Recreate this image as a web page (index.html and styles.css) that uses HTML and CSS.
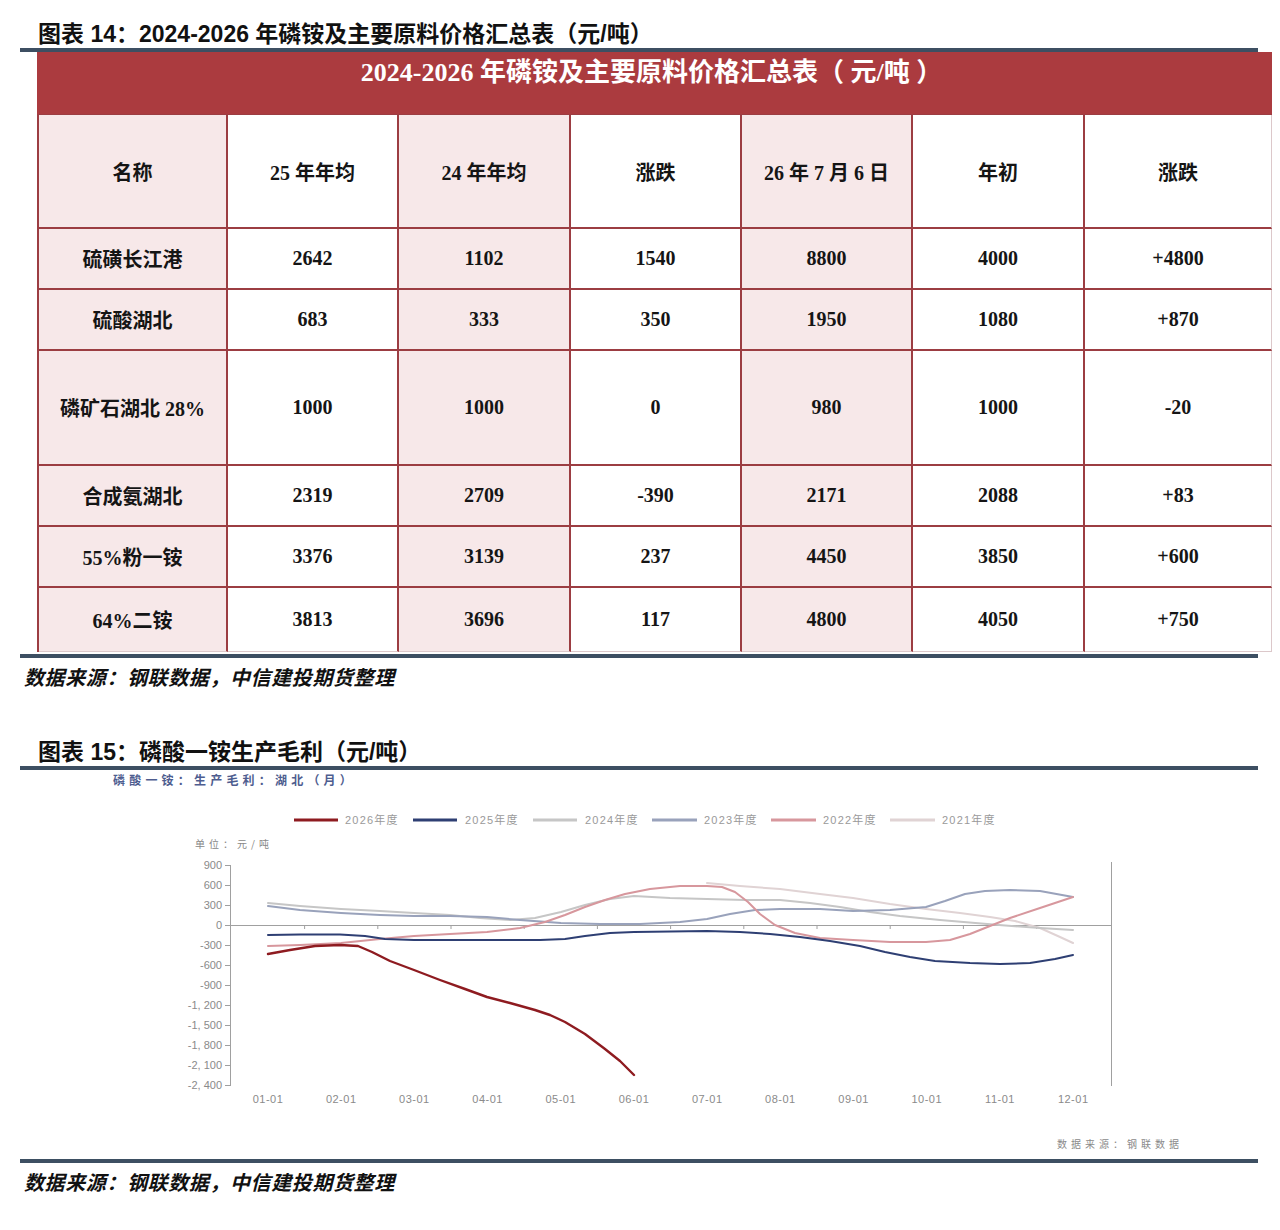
FILE: index.html
```html
<!DOCTYPE html>
<html lang="zh-CN">
<head>
<meta charset="utf-8">
<title>磷铵价格汇总</title>
<link rel="stylesheet" href="styles.css">
</head>
<body>
<div class="page">
  <h2 class="fig-title">图表 14：2024-2026 年磷铵及主要原料价格汇总表（元/吨）</h2>
  <div class="rule"></div>
  <div class="price-table">
    <div class="band">2024-2026 年磷铵及主要原料价格汇总表（ 元/吨 ）</div>
    <div class="grid">
      <div class="c s">名称</div><div class="c">25 年年均</div><div class="c s">24 年年均</div><div class="c">涨跌</div><div class="c s">26 年 7 月 6 日</div><div class="c">年初</div><div class="c e">涨跌</div>
      <div class="c s">硫磺长江港</div><div class="c">2642</div><div class="c s">1102</div><div class="c">1540</div><div class="c s">8800</div><div class="c">4000</div><div class="c e">+4800</div>
      <div class="c s">硫酸湖北</div><div class="c">683</div><div class="c s">333</div><div class="c">350</div><div class="c s">1950</div><div class="c">1080</div><div class="c e">+870</div>
      <div class="c s">磷矿石湖北 28%</div><div class="c">1000</div><div class="c s">1000</div><div class="c">0</div><div class="c s">980</div><div class="c">1000</div><div class="c e">-20</div>
      <div class="c s">合成氨湖北</div><div class="c">2319</div><div class="c s">2709</div><div class="c">-390</div><div class="c s">2171</div><div class="c">2088</div><div class="c e">+83</div>
      <div class="c s">55%粉一铵</div><div class="c">3376</div><div class="c s">3139</div><div class="c">237</div><div class="c s">4450</div><div class="c">3850</div><div class="c e">+600</div>
      <div class="c s l">64%二铵</div><div class="c l">3813</div><div class="c s l">3696</div><div class="c l">117</div><div class="c s l">4800</div><div class="c l">4050</div><div class="c e l">+750</div>
    </div>
  </div>
  <div class="rule rule-gap"></div>
  <p class="source">数据来源：钢联数据，中信建投期货整理</p>

  <h2 class="fig-title fig-title-2">图表 15：磷酸一铵生产毛利（元/吨）</h2>
  <div class="rule rule-gap"></div>
  <svg class="chart" width="1238" height="389" viewBox="20 770 1238 389" xmlns="http://www.w3.org/2000/svg">
    <text class="ctitle" x="113" y="785">磷酸一铵：生产毛利：湖北（月）</text>

    <g class="legend">
      <line x1="294" y1="820" x2="338" y2="820" stroke="#8e1b20"/>
      <text x="345" y="824">2026年度</text>
      <line x1="413" y1="820" x2="457" y2="820" stroke="#2e3f73"/>
      <text x="465" y="824">2025年度</text>
      <line x1="533" y1="820" x2="577" y2="820" stroke="#c6c6c6"/>
      <text x="585" y="824">2024年度</text>
      <line x1="652" y1="820" x2="697" y2="820" stroke="#99a2bb"/>
      <text x="704" y="824">2023年度</text>
      <line x1="771" y1="820" x2="816" y2="820" stroke="#d7979d"/>
      <text x="823" y="824">2022年度</text>
      <line x1="890" y1="820" x2="935" y2="820" stroke="#e0d3d4"/>
      <text x="942" y="824">2021年度</text>
    </g>

    <text class="unit" x="195" y="848">单位：元/吨</text>

    <g class="axis">
      <line x1="230.5" y1="865" x2="230.5" y2="1086"/>
      <line x1="1111.5" y1="862" x2="1111.5" y2="1086"/>
      <line x1="230" y1="925.5" x2="1112" y2="925.5"/>
      <line x1="225" y1="865.5" x2="230" y2="865.5"/>
      <line x1="225" y1="885.5" x2="230" y2="885.5"/>
      <line x1="225" y1="905.5" x2="230" y2="905.5"/>
      <line x1="225" y1="925.5" x2="230" y2="925.5"/>
      <line x1="225" y1="945.5" x2="230" y2="945.5"/>
      <line x1="225" y1="965.5" x2="230" y2="965.5"/>
      <line x1="225" y1="985.5" x2="230" y2="985.5"/>
      <line x1="225" y1="1005.5" x2="230" y2="1005.5"/>
      <line x1="225" y1="1025.5" x2="230" y2="1025.5"/>
      <line x1="225" y1="1045.5" x2="230" y2="1045.5"/>
      <line x1="225" y1="1065.5" x2="230" y2="1065.5"/>
      <line x1="225" y1="1085.5" x2="230" y2="1085.5"/>
      <line x1="304.6" y1="925" x2="304.6" y2="929"/>
      <line x1="377.8" y1="925" x2="377.8" y2="929"/>
      <line x1="451" y1="925" x2="451" y2="929"/>
      <line x1="524.2" y1="925" x2="524.2" y2="929"/>
      <line x1="597.4" y1="925" x2="597.4" y2="929"/>
      <line x1="670.6" y1="925" x2="670.6" y2="929"/>
      <line x1="743.8" y1="925" x2="743.8" y2="929"/>
      <line x1="817" y1="925" x2="817" y2="929"/>
      <line x1="890.2" y1="925" x2="890.2" y2="929"/>
      <line x1="963.4" y1="925" x2="963.4" y2="929"/>
      <line x1="1036.6" y1="925" x2="1036.6" y2="929"/>
    </g>

    <g class="ylab">
      <text x="222" y="869">900</text>
      <text x="222" y="889">600</text>
      <text x="222" y="909">300</text>
      <text x="222" y="929">0</text>
      <text x="222" y="949">-300</text>
      <text x="222" y="969">-600</text>
      <text x="222" y="989">-900</text>
      <text x="222" y="1009">-1, 200</text>
      <text x="222" y="1029">-1, 500</text>
      <text x="222" y="1049">-1, 800</text>
      <text x="222" y="1069">-2, 100</text>
      <text x="222" y="1089">-2, 400</text>
    </g>

    <g class="xlab">
      <text x="268" y="1103">01-01</text>
      <text x="341.2" y="1103">02-01</text>
      <text x="414.4" y="1103">03-01</text>
      <text x="487.6" y="1103">04-01</text>
      <text x="560.8" y="1103">05-01</text>
      <text x="634" y="1103">06-01</text>
      <text x="707.2" y="1103">07-01</text>
      <text x="780.4" y="1103">08-01</text>
      <text x="853.6" y="1103">09-01</text>
      <text x="926.8" y="1103">10-01</text>
      <text x="1000" y="1103">11-01</text>
      <text x="1073.2" y="1103">12-01</text>
    </g>

    <g class="series">
      <polyline stroke="#e0d3d4" points="707,883 740,886 780,889 820,894 853,898 890,904 926,909 960,913 990,917 1015,921 1040,928 1060,937 1073,943"/>
      <polyline stroke="#c6c6c6" points="268,903 300,906 341,909 380,911 414,913 450,915 480,918 510,920 535,918 561,912 585,905 610,899 634,896 670,898 707,899 745,900 780,900 810,903 840,907 870,912 900,916 940,920 999,925 1040,928 1073,930"/>
      <polyline stroke="#99a2bb" points="268,906 300,910 341,913 380,915 414,916 450,916 487,917 520,920 561,923 600,924 640,924 680,922 707,919 730,914 755,910 780,909 820,909 853,911 890,910 926,907 945,901 965,894 985,891 1010,890 1040,891 1073,897"/>
      <polyline stroke="#d7979d" points="268,946 300,945 341,943 380,939 414,936 450,934 487,932 520,928 545,922 565,915 585,907 605,900 625,894 650,889 680,886 707,886 722,887 735,892 748,902 760,914 775,925 795,933 820,938 853,940 890,942 926,942 950,940 970,934 990,926 1010,918 1040,908 1073,897"/>
      <polyline stroke="#2e3f73" points="268,935 300,934.5 340,934.5 365,936 385,939 414,940 487,940 540,940 565,939 585,936 610,933 634,932 707,931 740,932 770,934 800,937 830,941 860,946 885,952 910,957 935,961 970,963 1000,964 1030,963 1055,959 1073,955"/>
      <polyline class="s26" stroke="#8e1b20" points="268,954 290,950 315,946 340,945 358,946 372,952 390,961 414,970 440,980 465,989 487,997 510,1003 535,1010 550,1015 565,1022 585,1034 605,1049 620,1061 634,1075"/>
    </g>

    <text class="csrc" x="1057" y="1148">数据来源：钢联数据</text>
  </svg>
  <div class="rule"></div>
  <p class="source">数据来源：钢联数据，中信建投期货整理</p>
</div>
</body>
</html>
```

FILE: styles.css
```css
html, body {
  margin: 0;
  padding: 0;
  background: #ffffff;
}

.page {
  width: 1280px;
  height: 1230px;
  overflow: hidden;
}

.fig-title {
  margin: 0;
  height: 48px;
  box-sizing: border-box;
  padding: 21px 0 0 38px;
  font-family: "Liberation Sans", "Noto Sans CJK SC", sans-serif;
  font-size: 23px;
  line-height: 26px;
  font-weight: 700;
  color: #111111;
  white-space: nowrap;
}

.fig-title-2 {
  height: 64px;
  padding-top: 39px;
  margin-top: 8px;
}

.rule {
  margin-left: 20px;
  width: 1238px;
  height: 4px;
  background: #3d4f62;
}

.rule-gap {
  margin-top: 2px;
}

.price-table {
  margin-left: 37px;
  width: 1235px;
}

.band {
  height: 63px;
  box-sizing: border-box;
  padding-top: 5px;
  padding-right: 6px;
  background: #ab3b3f;
  color: #ffffff;
  text-align: center;
  font-family: "Liberation Serif", "Noto Sans CJK SC", serif;
  font-weight: 700;
  font-size: 26px;
  line-height: 32px;
  white-space: nowrap;
}

.grid {
  display: grid;
  grid-template-columns: 189px 171px 172px 171px 171px 172px 187px;
  grid-template-rows: 114px 61px 61px 115px 61px 61px 64px;
  border-left: 2px solid #9c3d42;
  border-top: 1px solid #9c3d42;
  margin-top: -1px;
}

.c {
  box-sizing: border-box;
  border-right: 2px solid #9c3d42;
  border-bottom: 2px solid #9c3d42;
  display: flex;
  align-items: center;
  justify-content: center;
  background: #ffffff;
  font-family: "Liberation Serif", "Noto Sans CJK SC", serif;
  font-weight: 700;
  font-size: 20px;
  color: #151515;
  white-space: nowrap;
}

.c.s {
  background: #f7e8e9;
}

.c.e {
  border-right: 1px solid #dcc8ca;
}

.c.l {
  border-bottom: 1px solid #dcc8ca;
}

.source {
  margin: 0;
  padding: 6px 0 0 24px;
  font-family: "Liberation Sans", "Noto Sans CJK SC", sans-serif;
  font-size: 20px;
  line-height: 28px;
  font-weight: 700;
  font-style: italic;
  letter-spacing: 0.6px;
  color: #111111;
}

.chart {
  display: block;
  margin-left: 20px;
}

.ctitle {
  font-family: "Noto Sans CJK SC", sans-serif;
  font-size: 12px;
  font-weight: 700;
  letter-spacing: 4.2px;
  fill: #4e5d8f;
}

.legend line {
  stroke-width: 3;
}

.legend text {
  font-family: "Liberation Sans", "Noto Sans CJK SC", sans-serif;
  font-size: 11px;
  letter-spacing: 1.2px;
  fill: #9a9a9a;
}

.unit {
  font-family: "Noto Sans CJK SC", sans-serif;
  font-size: 10px;
  letter-spacing: 4px;
  fill: #888888;
}

.axis line {
  stroke: #a0a0a0;
  stroke-width: 1;
}

.ylab text {
  font-family: "Liberation Sans", sans-serif;
  font-size: 11px;
  fill: #8a8a8a;
  text-anchor: end;
}

.xlab text {
  font-family: "Liberation Sans", sans-serif;
  font-size: 11px;
  fill: #8a8a8a;
  text-anchor: middle;
  letter-spacing: 0.5px;
}

.series polyline {
  fill: none;
  stroke-width: 2;
  stroke-linejoin: round;
  stroke-linecap: round;
}

.series .s26 {
  stroke-width: 2.4;
}

.csrc {
  font-family: "Noto Sans CJK SC", sans-serif;
  font-size: 10px;
  letter-spacing: 4px;
  fill: #8a8a8a;
}
```
